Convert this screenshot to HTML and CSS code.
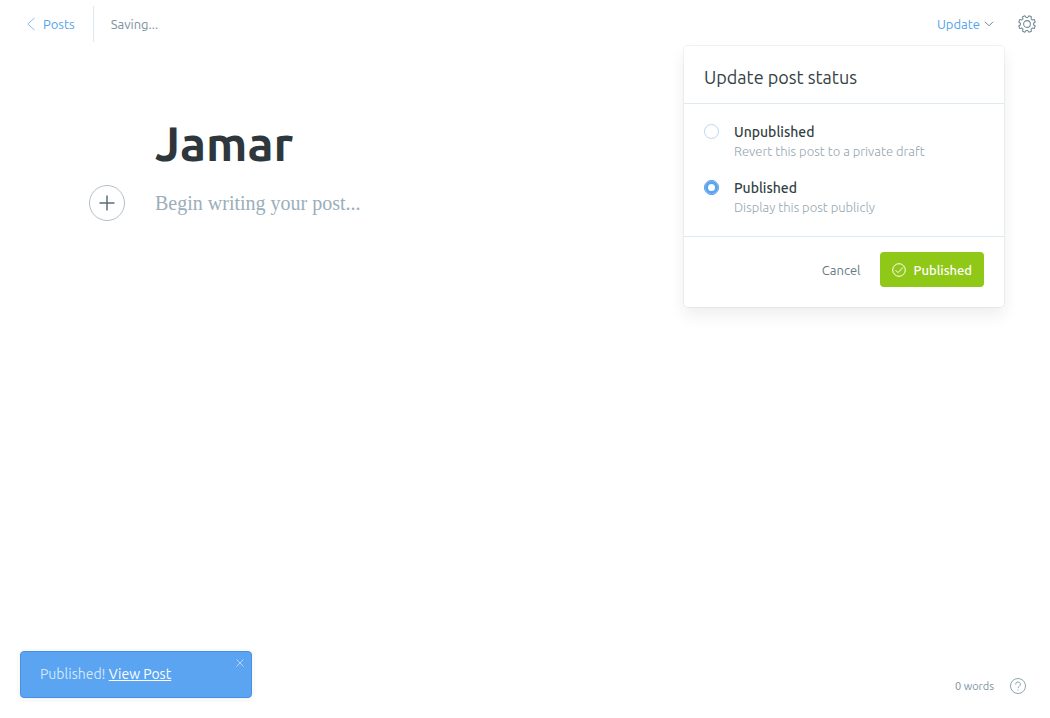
FILE: index.html
```html
<!DOCTYPE html>
<html lang="en">
<head>
<meta charset="utf-8">
<meta name="viewport" content="width=device-width, initial-scale=1">
<title>Jamar</title>
<link rel="stylesheet" href="styles.css">
</head>
<body>
<div class="app">
  <header class="topbar">
    <nav class="crumbs">
      <a class="back" href="#posts">
        <svg width="8" height="14" viewBox="0 0 8 14" aria-hidden="true"><path d="M7.500 1 .8 7l6.700 6"/></svg>
        Posts
      </a>
      <span class="save-state">Saving...</span>
    </nav>
    <div class="actions">
      <button class="update" type="button">Update
        <svg width="10" height="6" viewBox="0 0 10 6" aria-hidden="true"><path d="M1 .8 5 4.800 9 .8"/></svg>
      </button>
      <button class="settings" type="button" aria-label="Settings">
        <svg width="18" height="18" viewBox="0 0 24 24" aria-hidden="true"><circle cx="12" cy="12" r="4.500"/><path d="M20.730 13.070 22.990 14.640 21.630 17.900 18.930 17.420 17.420 18.930 17.900 21.630 14.640 22.990 13.070 20.730 10.930 20.730 9.360 22.990 6.100 21.630 6.580 18.930 5.070 17.420 2.370 17.900 1.010 14.640 3.270 13.070 3.270 10.930 1.010 9.360 2.370 6.100 5.070 6.580 6.580 5.070 6.100 2.370 9.360 1.010 10.930 3.270 13.070 3.270 14.640 1.010 17.900 2.370 17.420 5.070 18.930 6.580 21.630 6.100 22.990 9.360 20.730 10.930z"/></svg>
      </button>
      <form class="popover">
        <h2 class="popover-title">Update post status</h2>
        <div class="options">
          <label class="option">
            <input class="radio" type="radio" name="status">
            <span class="option-text"><strong class="option-name">Unpublished</strong><span class="option-note">Revert this post to a private draft</span></span>
          </label>
          <label class="option">
            <input class="radio" type="radio" name="status" checked>
            <span class="option-text"><strong class="option-name">Published</strong><span class="option-note">Display this post publicly</span></span>
          </label>
        </div>
        <div class="popover-footer">
          <button class="cancel" type="button">Cancel</button>
          <button class="publish" type="button">
            <svg width="14" height="14" viewBox="0 0 14 14" aria-hidden="true"><circle cx="7" cy="7" r="6.300"/><path d="M3.600 7.200 6 9.600l5-5.200"/></svg>
            Published
          </button>
        </div>
      </form>
    </div>
  </header>

  <main class="editor">
    <h1 class="title">Jamar</h1>
    <div class="body-row">
      <button class="add" type="button" aria-label="Add card">
        <svg width="16" height="16" viewBox="0 0 16 16" aria-hidden="true"><path d="M8 .5v15M.5 8h15"/></svg>
      </button>
      <p class="placeholder">Begin writing your post...</p>
    </div>
  </main>

  <footer class="statusbar">
    <div class="toast" role="status">
      <p class="toast-text">Published! <a class="toast-link" href="#view">View Post</a></p>
      <button class="close" type="button" aria-label="Close">
        <svg width="8" height="8" viewBox="0 0 8 8" aria-hidden="true"><path d="M.5.5l7 7M7.500.5l-7 7"/></svg>
      </button>
    </div>
    <div class="stats">
      <span>0 words</span>
      <a class="help" href="#help" aria-label="Help">
        <svg width="16" height="16" viewBox="0 0 16 16" aria-hidden="true"><circle cx="8" cy="8" r="7.500"/><path d="M5.600 6.400a2.400 2.400 0 1 1 3.600 2.050Q8 9.100 8 10.200M8 11.500v1"/></svg>
      </a>
    </div>
  </footer>
</div>
</body>
</html>
```
FILE: styles.css
```css
* { box-sizing: border-box; }

body {
  margin: 0;
  color: #343f44;
  background: #fff;
  font-family: Ubuntu, "Open Sans", "Noto Sans", sans-serif;
  font-size: 13px;
  line-height: 20px;
}

h1, h2, p { margin: 0; }

button {
  padding: 0;
  border: 0;
  background: none;
  color: inherit;
  font: inherit;
  cursor: pointer;
}

a { color: inherit; text-decoration: none; }

svg {
  display: block;
  flex: none;
  fill: none;
  stroke: currentColor;
  stroke-width: 1;
}

.app {
  display: flex;
  flex-direction: column;
  min-height: 100vh;
}

.topbar {
  display: flex;
  justify-content: space-between;
  align-items: center;
  height: 48px;
  padding: 0 14px 0 27px;
}

.crumbs, .actions { display: flex; align-items: center; }

.back {
  display: flex;
  align-items: center;
  gap: 8px;
  height: 36px;
  padding-right: 18px;
  border-right: 1px solid #dfe9f1;
  color: #54a3ec;
}

.back svg { color: #86bdf3; }

.save-state { padding-left: 17px; color: #7d92a1; }

.actions { position: relative; gap: 24px; }

.update { display: flex; align-items: center; gap: 4px; color: #54a3ec; }
.update svg { color: #6f8596; }
.settings { color: #738a94; }
.settings svg { stroke-width: 1.4; stroke-linejoin: round; }

.popover {
  position: absolute;
  top: 32px;
  right: 32px;
  width: 320px;
  border-radius: 4px;
  background: #fff;
  box-shadow: 0 0 0 1px rgba(39, 44, 49, .06), 0 8px 16px rgba(39, 44, 49, .08);
}

.popover-title {
  padding: 19px 20px 14px;
  border-bottom: 1px solid #dfe9f1;
  font-size: 18px;
  font-weight: 400;
  line-height: 24px;
}

.options {
  display: grid;
  gap: 18px;
  padding: 19px 20px;
  border-bottom: 1px solid #dfe9f1;
}

.option { display: flex; gap: 15px; cursor: pointer; }

.radio {
  appearance: none;
  flex: none;
  width: 15px;
  height: 15px;
  margin: 1px 0 0;
  border: 1px solid #bfd6ec;
  border-radius: 50%;
  background: #fff;
}

.radio:checked {
  border-color: #4390e5;
  box-shadow: inset 0 0 0 3px #5aa4f1;
}

.option-text { display: grid; line-height: 19px; }
.option-name { font-size: 14px; font-weight: 500; }
.option-note { color: #95a5af; font-weight: 300; }

.popover-footer {
  display: flex;
  justify-content: flex-end;
  align-items: center;
  gap: 20px;
  padding: 15px 20px 20px;
}

.cancel { color: #667a86; }

.publish {
  display: flex;
  align-items: center;
  gap: 7px;
  height: 35px;
  padding: 0 12px;
  border-radius: 4px;
  background: #90c818;
  color: #fff;
  font-weight: 500;
}

.editor {
  flex: 1;
  width: 100%;
  max-width: 740px;
  margin: 0 auto;
  padding-top: 67px;
}

.title {
  color: #2d373c;
  font-size: 48px;
  font-weight: 700;
  line-height: 56px;
}

.body-row {
  display: flex;
  align-items: center;
  gap: 30px;
  margin: 14px 0 0 -66px;
}

.add {
  display: grid;
  place-items: center;
  width: 36px;
  height: 36px;
  border: 1px solid #b0bfc9;
  border-radius: 50%;
  color: #5a6e79;
}

.add svg { stroke-width: 1.5; }

.placeholder {
  color: #9baeba;
  font-family: "Liberation Serif", Georgia, serif;
  font-size: 20px;
  line-height: 32px;
}

.statusbar {
  display: flex;
  justify-content: space-between;
  align-items: center;
  padding: 0 24px 20px 20px;
}

.toast {
  display: flex;
  justify-content: space-between;
  align-items: flex-start;
  width: 232px;
  padding: 7px 7px 13px 19px;
  border: 1px solid #4390e5;
  border-radius: 4px;
  background: #5aa4f1;
  color: #d3e7fb;
  box-shadow: 0 1px 6px rgba(39, 44, 49, .08);
}

.toast-text { padding-top: 5px; font-size: 14px; }
.toast-link { color: #fff; text-decoration: underline; }
.close { color: #b4d6f9; }

.stats {
  display: flex;
  align-items: center;
  gap: 16px;
  padding-top: 23px;
  color: #7d92a1;
  font-size: 11px;
}

.help { color: #8fa3b0; }
```
